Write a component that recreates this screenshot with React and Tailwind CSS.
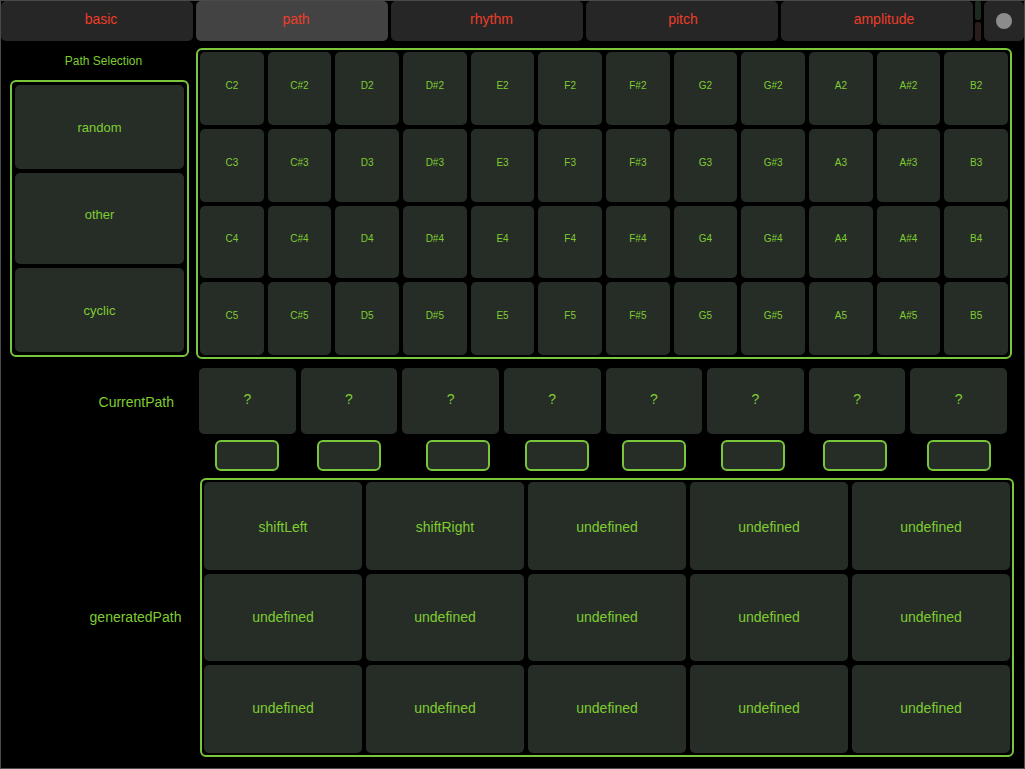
import React from "react";

const tabs = ["basic", "path", "rhythm", "pitch", "amplitude"];
const tabShift = ["pl-[8px]", "pl-[8px]", "pl-[9px]", "pl-[2px]", "pl-[14px]"];
const notes = ["C", "C#", "D", "D#", "E", "F", "F#", "G", "G#", "A", "A#", "B"];
const octaves = [2, 3, 4, 5];
const boxShift = ["", "", "translate-x-[7px]", "translate-x-[5px]", "", "-translate-x-[2px]", "-translate-x-[2px]", ""];
const generated = [
  "shiftLeft", "shiftRight", "undefined", "undefined", "undefined",
  "undefined", "undefined", "undefined", "undefined", "undefined",
  "undefined", "undefined", "undefined", "undefined", "undefined",
];

export default function App() {
  return (
    <div
      className="w-[1025px] h-[769px] bg-black border border-[#4a4a4a] flex flex-col overflow-hidden"
      style={{ fontFamily: '"Liberation Sans", Arial, sans-serif' }}
    >
      {/* Top tab bar */}
      <div className="flex h-[40px] gap-[3px]">
        {tabs.map((t, i) => (
          <div
            key={t}
            className={`w-[192px] h-full rounded-[5px] flex items-center justify-center pb-[4px] text-[14px] text-[#ec3d29] ${tabShift[i]} ${
              t === "path" ? "bg-[#434343]" : "bg-[#262626]"
            }`}
          >
            {t}
          </div>
        ))}
        <div className="w-[6px] flex flex-col gap-[2px] -ml-[1px]">
          <div className="flex-1 rounded-[2px] bg-[#1d2a1f]" />
          <div className="flex-1 rounded-[2px] bg-[#2b1d1c]" />
        </div>
        <div className="flex-1 rounded-[5px] bg-[#262626] flex items-center justify-center">
          <div className="w-[16px] h-[16px] rounded-full bg-[#8c8c8c]" />
        </div>
      </div>

      {/* Row 1 */}
      <div className="flex mt-[7px]">
        <div className="w-[195px] flex flex-col">
          <div className="pt-[6px] h-[32px] text-center text-[12px] leading-[14px] text-[#7fcc31] pl-[10px]">
            Path Selection
          </div>
          <div className="ml-[9px] w-[179px] h-[277px] border-2 border-[#79c63a] rounded-[6px] p-[3px] flex flex-col gap-[4px]">
            {["random", "other", "cyclic"].map((b, i) => (
              <div
                key={b}
                className={`flex-1 rounded-[5px] bg-[#262d27] flex items-center justify-center text-[13px] text-[#7fcc31] ${
                  i === 1 ? "pb-[8px]" : "pt-[2px]"
                }`}
              >
                {b}
              </div>
            ))}
          </div>
        </div>
        <div className="w-[816px] h-[311px] border-2 border-[#79c63a] rounded-[6px] p-[2px] grid grid-cols-12 grid-rows-4 gap-[4px]">
          {octaves.map((o) =>
            notes.map((n) => (
              <div
                key={n + o}
                className="rounded-[5px] bg-[#262d27] flex items-center justify-center pb-[6px] text-[10px] text-[#7fcc31]"
              >
                {n}
                {o}
              </div>
            ))
          )}
        </div>
      </div>

      {/* Row 2: CurrentPath */}
      <div className="flex mt-[9px]">
        <div className="w-[198px] flex items-center justify-end pr-[25px] pt-[2px] text-[14px] text-[#7fcc31]">
          CurrentPath
        </div>
        <div className="w-[808px] h-[66px] grid grid-cols-8 gap-[5px]">
          {Array.from({ length: 8 }).map((_, i) => (
            <div
              key={i}
              className="rounded-[5px] bg-[#262d27] flex items-center justify-center pb-[3px] text-[14px] text-[#7fcc31]"
            >
              ?
            </div>
          ))}
        </div>
      </div>
      <div className="flex mt-[6px]">
        <div className="w-[198px]" />
        <div className="w-[808px] h-[31px] grid grid-cols-8 gap-[5px] justify-items-center">
          {boxShift.map((s, i) => (
            <div
              key={i}
              className={`w-[64px] h-[31px] border-2 border-[#79c63a] rounded-[6px] bg-[#262d27] ${s}`}
            />
          ))}
        </div>
      </div>

      {/* Row 3: generatedPath */}
      <div className="flex mt-[7px]">
        <div className="w-[199px] flex items-center justify-center pl-[70px] pt-[0px] text-[14px] text-[#7fcc31]">
          generatedPath
        </div>
        <div className="w-[814px] h-[279px] border-2 border-[#79c63a] rounded-[6px] p-[2px] grid grid-cols-5 grid-rows-3 gap-[4px]">
          {generated.map((g, i) => (
            <div
              key={i}
              className={`rounded-[5px] bg-[#262d27] flex items-center justify-center text-[14px] text-[#7fcc31] ${
                i < 5 ? "pt-[4px]" : i >= 10 ? "pb-[2px]" : ""
              }`}
            >
              {g}
            </div>
          ))}
        </div>
      </div>
    </div>
  );
}
